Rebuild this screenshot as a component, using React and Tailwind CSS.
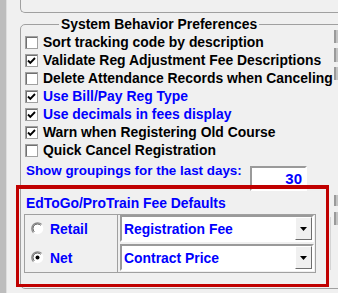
import React from "react";

const font = { fontFamily: '"Liberation Sans", Arial, sans-serif' };

const Check = ({ checked }) => (
    <span className="w-[13px] h-[13px] shrink-0 bg-white border border-[#a0a0a0] shadow-[inset_1px_1px_0_#707070] flex items-center justify-center">
        {checked && (
            <svg width="11" height="11" viewBox="0 0 11 11">
                <path d="M2 5.5 L4.3 7.8 L9 3" fill="none" stroke="#000" strokeWidth="1.9" />
            </svg>
        )}
    </span>
);

const Radio = ({ checked }) => (
    <svg width="13" height="13" viewBox="0 0 13 13" className="shrink-0">
        <circle cx="6.5" cy="6.5" r="5.8" fill="#fff" />
        <path d="M2.4 10.6 A5.8 5.8 0 0 1 10.6 2.4" fill="none" stroke="#8a8a8a" strokeWidth="1.3" />
        <path d="M3.3 9.7 A4.5 4.5 0 0 1 9.7 3.3" fill="none" stroke="#505050" strokeWidth="1" />
        {checked && <circle cx="6.5" cy="6.5" r="2" fill="#000" />}
    </svg>
);

const Combo = ({ value }) => (
    <div className="w-[194px] h-[27px] flex bg-white border-2 border-t-[#9a9a9a] border-l-[#9a9a9a] border-r-white border-b-white">
        <span className="flex-1 flex items-center pl-[2px] text-[#0000ff]">{value}</span>
        <span className="w-[17px] h-full bg-[#f0f0f0] border border-t-white border-l-white border-r-[#6e6e6e] border-b-[#6e6e6e] flex items-center justify-center">
            <svg width="7" height="4" viewBox="0 0 7 4">
                <path d="M0 0 H7 L3.5 4 Z" fill="#000" />
            </svg>
        </span>
    </div>
);

const rows = [
    { label: "Sort tracking code by description", checked: false },
    { label: "Validate Reg Adjustment Fee Descriptions", checked: true },
    { label: "Delete Attendance Records when Canceling", checked: false },
    { label: "Use Bill/Pay Reg Type", checked: true, blue: true },
    { label: "Use decimals in fees display", checked: true, blue: true },
    { label: "Warn when Registering Old Course", checked: true },
    { label: "Quick Cancel Registration", checked: false },
];

export default function App() {
    return (
        <div
            className="relative w-[338px] h-[293px] overflow-hidden flex bg-[#f0f0f0] text-[13.9px] font-bold leading-[16px] text-black"
            style={font}
        >
            <div className="w-[7px] shrink-0 bg-[#bdbdbd] border-r border-[#dedede]" />
            <div className="flex flex-col shrink-0 w-[330px]">
                <div className="ml-[13px] h-[13px] w-[340px] shrink-0 border-l border-b border-[#a0a0a0] rounded-bl-[5px]" />

                <fieldset className="ml-[13px] mt-[3px] w-[340px] shrink-0 p-0 m-0 border border-[#a0a0a0] rounded-[5px]">
                    <legend className="ml-[38px] px-[2px] leading-[16px]">System Behavior Preferences</legend>
                    <div className="flex">
                        <div className="w-[313px] shrink-0 flex flex-col pt-[1px] pb-[15px]">
                            {rows.map((r) => (
                                <div key={r.label} className="h-[18px] flex items-center pl-[4px] gap-[5px] whitespace-nowrap">
                                    <Check checked={r.checked} />
                                    <span className={r.blue ? "text-[#0000ff]" : "text-black"}>{r.label}</span>
                                </div>
                            ))}

                            <div className="h-[32px] flex items-start pl-[5px]">
                                <span className="w-[224px] shrink-0 mt-[4px] text-[#0000ff] text-[13.4px] whitespace-nowrap">Show groupings for the last days:</span>
                                <div className="w-[57px] h-[25px] mt-[7px] bg-white border-2 border-t-[#9a9a9a] border-l-[#9a9a9a] border-r-white border-b-white flex items-center justify-end pr-[3px] text-[#0000ff] text-[15px]">
                                    30
                                </div>
                            </div>

                            <div className="mt-[4px] h-[16px] pl-[5px] text-[#0000ff] whitespace-nowrap">EdToGo/ProTrain Fee Defaults</div>

                            <div className="mt-[3px] flex">
                                <div className="ml-[3px] w-[292px] h-[59px] border border-[#a0a0a0] flex">
                                    <div className="w-[93px] border-r border-[#a0a0a0] flex flex-col gap-[2px]">
                                        <div className="h-[27px] flex items-center pl-[6px] gap-[6px] text-[#0000ff]">
                                            <Radio checked={false} />
                                            <span>Retail</span>
                                        </div>
                                        <div className="h-[27px] flex items-center pl-[6px] gap-[6px] text-[#0000ff]">
                                            <Radio checked={true} />
                                            <span>Net</span>
                                        </div>
                                    </div>
                                    <div className="flex flex-col gap-[2px] pl-[2px]">
                                        <Combo value="Registration Fee" />
                                        <Combo value="Contract Price" />
                                    </div>
                                </div>
                                <div className="ml-[14px] mt-[3px] w-[1px] h-[53px] bg-[#d4d4d4]" />
                            </div>
                        </div>

                        <div className="flex flex-col">
                            <div className="mt-[-2px] w-[14px] h-[13px] bg-[#c4c4c4] border-l-2 border-[#9a9a9a]" />
                            <div className="mt-[5px] w-[14px] h-[14px] bg-[#c4c4c4] border-l-2 border-[#9a9a9a]" />
                            <div className="mt-[5px] w-[14px] h-[13px] bg-[#c4c4c4] border-l-2 border-[#9a9a9a]" />
                            <div className="mt-[115px] w-[14px] h-[11px] bg-[#c4c4c4] border-l-2 border-[#9a9a9a]" />
                            <div className="mt-[6px] w-[14px] h-[13px] bg-[#c4c4c4] border-l-2 border-[#9a9a9a]" />
                        </div>
                    </div>
                </fieldset>
            </div>

            <div className="absolute left-[16px] top-[185px] w-[313px] h-[102px] border-[3px] border-t-[4px] border-[#c00000] pointer-events-none" />
        </div>
    );
}
